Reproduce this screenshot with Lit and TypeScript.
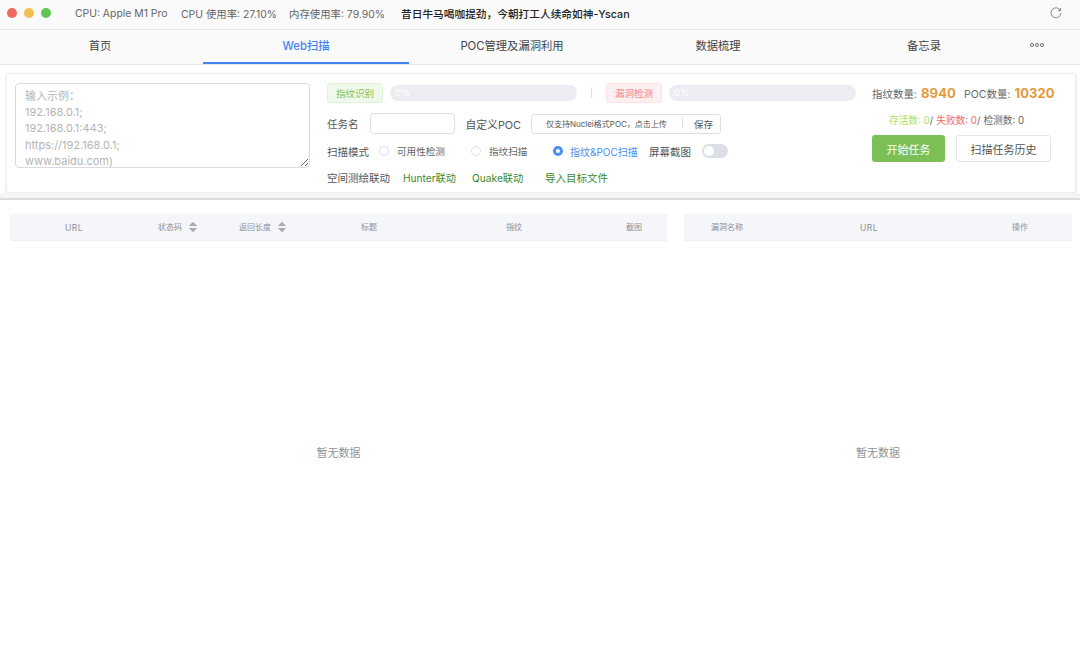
import { LitElement, html, css, svg } from "lit";
import { customElement } from "lit/decorators.js";

const sortIcon = svg`<svg class="sort" width="10" height="12" viewBox="0 0 10 12"><path d="M5 .8 9.2 5H.8zM5 11.2.8 7h8.4z" fill="#a8abb2"/></svg>`;

const placeholder = "输入示例：\n192.168.0.1;\n192.168.0.1:443;\nhttps://192.168.0.1;\nwww.baidu.com)";

@customElement("app-root")
export class AppRoot extends LitElement {
  static styles = css`
    :host {
      display: block;
      width: 1080px;
      height: 645px;
      overflow: hidden;
      background: #fff;
      color: #555;
      font-family: "Inter", "Noto Sans CJK SC", sans-serif;
      font-size: 11px;
    }
    * { box-sizing: border-box; }
    .titlebar {
      height: 30px;
      display: flex;
      align-items: center;
      background: #fafafa;
      border-bottom: 1px solid #e6e6e6;
      padding: 0 18px 3px 7px;
    }
    .lights { display: flex; gap: 7px; width: 68px; }
    .light { width: 10px; height: 10px; border-radius: 50%; }
    .red { background: #ee6a5f; }
    .yellow { background: #f5bd4f; }
    .green { background: #61c454; }
    .sys { font-size: 10.4px; color: #666; white-space: nowrap; }
    .s1 { width: 106px; }
    .s2 { width: 108px; }
    .s3 { width: 112px; }
    .title { flex: 1; font-size: 10.7px; font-weight: 500; color: #222; white-space: nowrap; }
    .reload { display: block; }

    .nav {
      height: 35px;
      display: flex;
      background: #fafafa;
      border-bottom: 1px solid #e6e6e6;
      margin-bottom: 8px;
    }
    .tabs { display: flex; margin-left: -3px; }
    .tab {
      width: 206px;
      height: 34px;
      display: flex;
      align-items: center;
      justify-content: center;
      font-size: 11.3px;
      font-weight: 400;
      color: #444;
      padding-bottom: 4px;
    }
    .tab.active { color: #3f84f0; font-weight: 500; border-bottom: 2px solid #3f84f0; padding-bottom: 2px; }
    .more { margin-left: 3px; height: 34px; display: flex; align-items: center; gap: 1.2px; padding-bottom: 4px; }
    .dot { width: 3.8px; height: 3.8px; border: 1px solid #666; border-radius: 50%; }

    .card {
      margin: 0 4px 0 6px;
      height: 120px;
      display: flex;
      background: #fff;
      border: 1px solid #eee;
      border-radius: 3px;
      box-shadow: 0 1px 3px rgba(0, 0, 0, 0.12);
      padding: 9px 0 0 8px;
    }
    textarea {
      width: 295px;
      height: 85px;
      flex: none;
      border: 1px solid #d9dbe0;
      border-radius: 4px;
      padding: 4px 9px 3px;
      font: 11px/16.2px "Inter", "Noto Sans CJK SC", sans-serif;
      overflow: hidden;
      outline: none;
      margin: 0 17px 0 0;
    }
    textarea::placeholder { color: #b5b5b5; }
    .mid { width: 545px; flex: none; display: flex; flex-direction: column; }
    .row { display: flex; align-items: center; white-space: nowrap; }
    .r1 { height: 20px; }
    .r2 { height: 21px; margin-top: 10px; }
    .r3 { height: 14px; margin-top: 10px; }
    .r4 { height: 14px; margin-top: 12px; }
    .label { font-size: 10.5px; color: #555; }
    .label.wide { font-size: 10.8px; }
    .tag {
      width: 56px;
      height: 20px;
      flex: none;
      border-radius: 3px;
      display: flex;
      align-items: center;
      justify-content: center;
      font-size: 9.5px;
    }
    .tag.ok { background: #f0f9eb; border: 1px solid #e1f3d8; color: #7cc25a; }
    .tag.bad { background: #fef0f0; border: 1px solid #fde2e2; color: #ee8585; }
    .bar {
      width: 187px;
      height: 16px;
      flex: none;
      margin-left: 7px;
      background: #ebedf3;
      border-radius: 8px;
      color: #fff;
      font-size: 9.5px;
      line-height: 16px;
      padding-left: 5px;
    }
    .vline { width: 1px; height: 10px; background: #dfe1e5; margin: 0 14px; flex: none; }
    .input { width: 85px; height: 21px; border: 1px solid #dcdfe6; border-radius: 4px; margin: 0 11px 0 11px; flex: none; }
    .upload {
      width: 190px;
      height: 20px;
      margin-left: 10px;
      flex: none;
      border: 1px solid #dcdfe6;
      border-radius: 3px;
      display: flex;
      align-items: center;
      font-size: 8px;
      color: #555;
      padding-left: 14px;
    }
    .upload .hint { width: 136px; }
    .upload .save { border-left: 1px solid #dcdfe6; height: 11px; display: flex; align-items: center; padding-left: 11px; font-size: 9.5px; }
    .radio { width: 10px; height: 10px; border-radius: 50%; border: 1px solid #dcdfe6; background: #fff; flex: none; }
    .radio.on { background: #fff; border: 3px solid #4a90ee; }
    .rt { font-size: 9.6px; color: #666; margin-left: 8px; }
    .rt.on { color: #4a90ee; margin-left: 7px; font-size: 10px; }
    .w1 { width: 74px; }
    .w2 { width: 64px; }
    .w3 { width: 79px; }
    .sl { width: 52px; }
    .toggle { width: 26px; height: 14px; border-radius: 7px; background: #dcdfe6; margin-left: 11px; padding: 2px; flex: none; }
    .knob { width: 10px; height: 10px; border-radius: 50%; background: #fff; }
    .link { color: #3c8a2c; font-size: 10.2px; }
    .l0 { width: 76px; }
    .l1 { width: 69px; }
    .l2 { width: 73px; }
    .l3 { font-size: 10.5px; }

    .right { flex: 1; display: flex; flex-direction: column; }
    .counts { height: 20px; display: flex; align-items: center; font-size: 10.5px; color: #666; white-space: nowrap; }
    .num { color: #e39a3b; font-size: 13px; font-weight: 700; margin-left: 4px; letter-spacing: 0.1px; }
    .n1 { width: 43px; }
    .stats { font-size: 9.7px; margin-top: 9px; height: 16px; display: flex; align-items: center; padding-left: 17px; color: #666; white-space: nowrap; }
    .alive { color: #a5e36d; }
    .fail { color: #ec6b6b; }
    .stats .next { margin-left: 3px; }
    .btns { display: flex; gap: 11px; margin-top: 7px; }
    .btn {
      height: 27px;
      border-radius: 3px;
      display: flex;
      align-items: center;
      justify-content: center;
      font-size: 11px;
    }
    .primary { width: 73px; background: #7cbf55; color: #fff; }
    .plain { width: 95px; background: #fff; border: 1px solid #e2e4e8; color: #555; }

    .band { height: 7px; background: #f5f5f5; border-bottom: 2px solid #dcdcdc; }

    .tables { display: flex; gap: 17px; padding: 14px 8px 0 10px; }
    .left { width: 657px; }
    .rightt { width: 388px; }
    .thead {
      height: 27px;
      display: grid;
      align-items: center;
      background: #f4f6fa;
      border-bottom: 1px solid #eef0f3;
      font-size: 8px;
      color: #8e9199;
      text-align: center;
    }
    .left .thead { grid-template-columns: 128px 81px 92px 116px 174px 66px; }
    .rightt .thead { grid-template-columns: 86px 198px 104px; }
    .th { display: flex; align-items: center; justify-content: center; height: 26px; padding-bottom: 1px; }
    .th.lat { letter-spacing: 0.5px; font-size: 8.5px; padding-bottom: 0; padding-top: 1px; }
    .th.sorted { justify-content: flex-start; padding-left: 20px; gap: 6px; }
    .empty {
      height: 422px;
      display: flex;
      align-items: center;
      justify-content: center;
      color: #909399;
      font-size: 11px;
    }
  `;

  render() {
    return html`
      <div class="titlebar">
        <div class="lights">
          <div class="light red"></div><div class="light yellow"></div><div class="light green"></div>
        </div>
        <div class="sys s1">CPU: Apple M1 Pro</div>
        <div class="sys s2">CPU 使用率: 27.10%</div>
        <div class="sys s3">内存使用率: 79.90%</div>
        <div class="title">昔日牛马喝咖提劲，今朝打工人续命如神-Yscan</div>
        <svg class="reload" width="12" height="12" viewBox="0 0 12 12" fill="none" stroke="#777" stroke-width="0.9">
          <path d="M10.4 3.4A5 5 0 1 0 11 6"/><path d="M10.6 1v2.6H8" />
        </svg>
      </div>
      <div class="nav">
        <div class="tabs">
          <div class="tab">首页</div>
          <div class="tab active">Web扫描</div>
          <div class="tab">POC管理及漏洞利用</div>
          <div class="tab">数据梳理</div>
          <div class="tab">备忘录</div>
        </div>
        <div class="more"><div class="dot"></div><div class="dot"></div><div class="dot"></div></div>
      </div>
      <div class="card">
        <textarea .placeholder=${placeholder}></textarea>
        <div class="mid">
          <div class="row r1">
            <div class="tag ok">指纹识别</div>
            <div class="bar">0%</div>
            <div class="vline"></div>
            <div class="tag bad">漏洞检测</div>
            <div class="bar">0%</div>
          </div>
          <div class="row r2">
            <span class="label">任务名</span>
            <div class="input"></div>
            <span class="label wide">自定义POC</span>
            <div class="upload">
              <span class="hint">仅支持Nuclei格式POC，点击上传</span>
              <span class="save">保存</span>
            </div>
          </div>
          <div class="row r3">
            <span class="label sl">扫描模式</span>
            <div class="radio"></div><span class="rt w1">可用性检测</span>
            <div class="radio"></div><span class="rt w2">指纹扫描</span>
            <div class="radio on"></div><span class="rt on w3">指纹&POC扫描</span>
            <span class="label">屏幕截图</span>
            <div class="toggle"><div class="knob"></div></div>
          </div>
          <div class="row r4">
            <span class="label l0">空间测绘联动</span>
            <span class="link l1">Hunter联动</span>
            <span class="link l2">Quake联动</span>
            <span class="link l3">导入目标文件</span>
          </div>
        </div>
        <div class="right">
          <div class="counts">
            <span>指纹数量:</span><span class="num n1">8940</span>
            <span>POC数量:</span><span class="num">10320</span>
          </div>
          <div class="stats">
            <span class="alive">存活数: 0</span><span>/</span>
            <span class="fail next">失败数: 0</span><span>/</span>
            <span class="next">检测数: 0</span>
          </div>
          <div class="btns">
            <div class="btn primary">开始任务</div>
            <div class="btn plain">扫描任务历史</div>
          </div>
        </div>
      </div>
      <div class="band"></div>
      <div class="tables">
        <div class="left">
          <div class="thead">
            <div class="th lat">URL</div>
            <div class="th sorted">状态码 ${sortIcon}</div>
            <div class="th sorted">返回长度 ${sortIcon}</div>
            <div class="th">标题</div>
            <div class="th">指纹</div>
            <div class="th">截图</div>
          </div>
          <div class="empty">暂无数据</div>
        </div>
        <div class="rightt">
          <div class="thead">
            <div class="th">漏洞名称</div>
            <div class="th lat">URL</div>
            <div class="th">操作</div>
          </div>
          <div class="empty">暂无数据</div>
        </div>
      </div>
    `;
  }
}
